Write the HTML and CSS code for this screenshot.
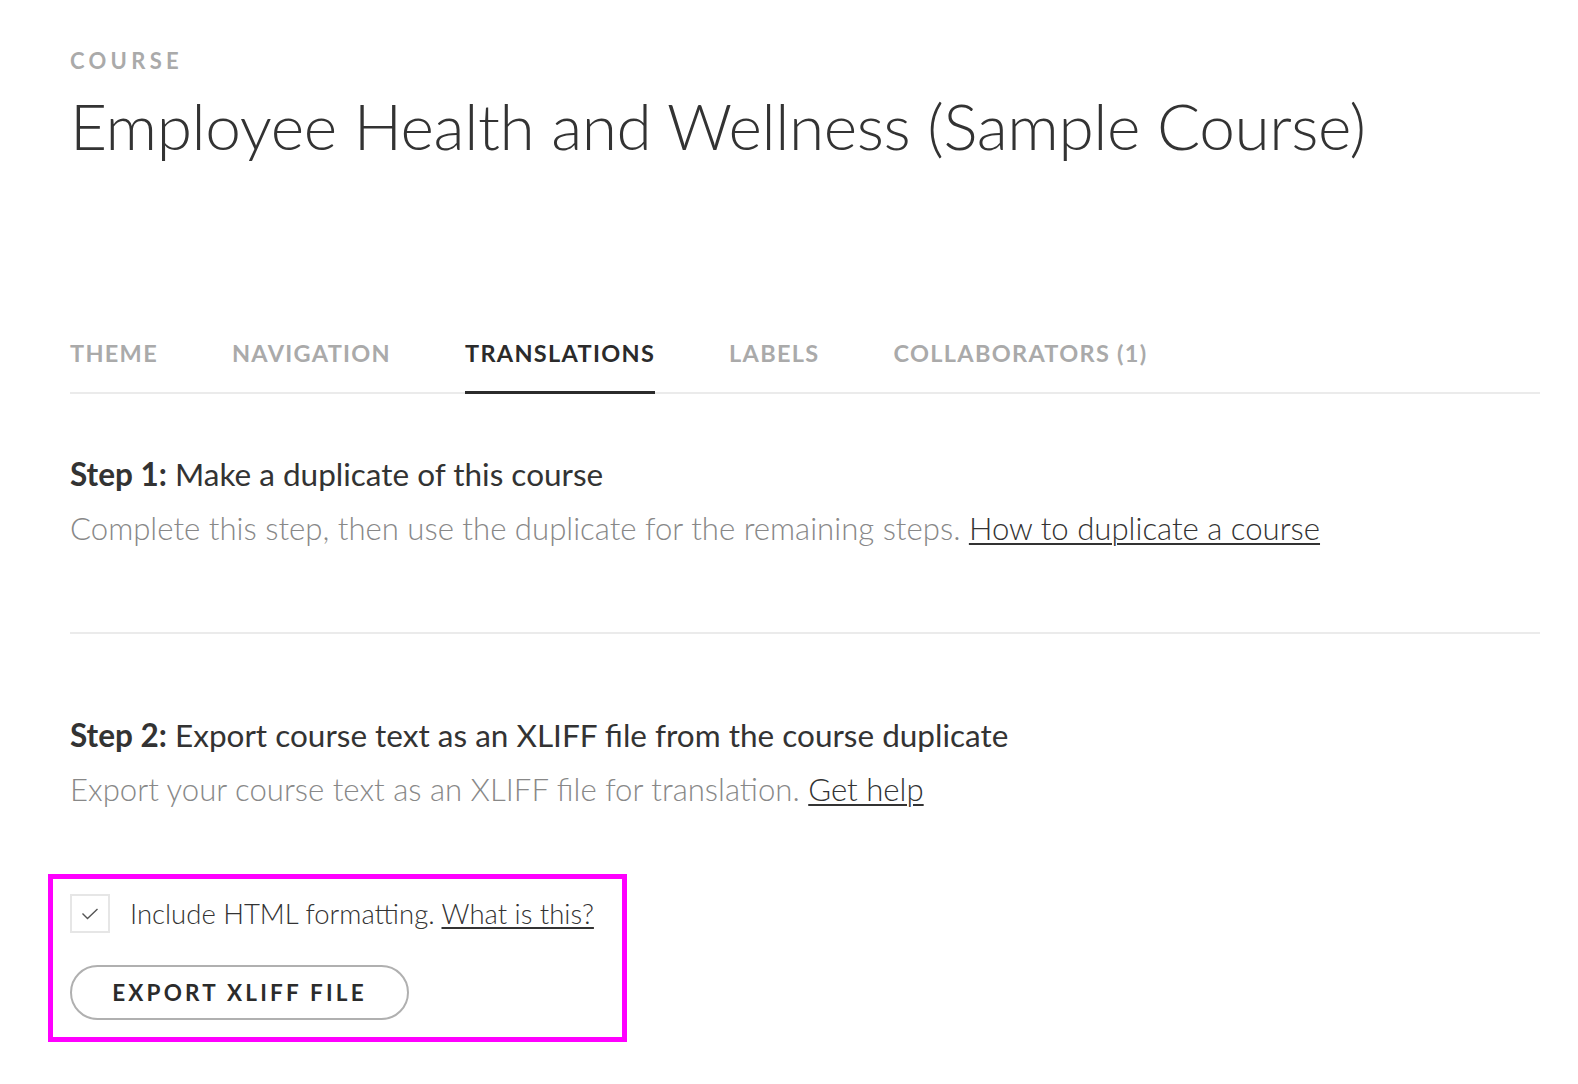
FILE: index.html
```html
<!DOCTYPE html>
<html lang="en">
<head>
<meta charset="utf-8">
<title>Course Settings</title>
<link rel="stylesheet" href="styles.css">
</head>
<body>
<main class="page">
  <header class="course-header">
    <div class="eyebrow">COURSE</div>
    <h1 class="course-title">Employee Health and Wellness (Sample Course)</h1>
  </header>
  <nav class="tabs">
    <a class="tab">THEME</a>
    <a class="tab">NAVIGATION</a>
    <a class="tab active">TRANSLATIONS</a>
    <a class="tab">LABELS</a>
    <a class="tab">COLLABORATORS (1)</a>
  </nav>
  <section class="step step-1">
    <h2 class="step-title"><strong>Step 1:</strong> Make a duplicate of this course</h2>
    <p class="step-desc">Complete this step, then use the duplicate for the remaining steps. <a class="link">How to duplicate a course</a></p>
  </section>
  <section class="step step-2">
    <h2 class="step-title"><strong>Step 2:</strong> Export course text as an XLIFF file from the course duplicate</h2>
    <p class="step-desc">Export your course text as an XLIFF file for translation. <a class="link">Get help</a></p>
    <div class="highlight">
      <label class="check-row">
        <span class="checkbox"><svg width="18" height="12" viewBox="0 0 18 12"><path d="M1.5 5.5 L6.5 10.5 L16.5 1" fill="none" stroke="#555" stroke-width="1.4"/></svg></span>
        <span class="check-label">Include HTML formatting. <a class="link">What is this?</a></span>
      </label>
      <button class="btn-export">EXPORT XLIFF FILE</button>
    </div>
  </section>
</main>
</body>
</html>
```

FILE: styles.css
```css
html, body {
  margin: 0;
  padding: 0;
  background: #fff;
}
body {
  font-family: Lato, "Open Sans", sans-serif;
  color: #333;
}
.page {
  padding: 48px 38px 0 70px;
}
.eyebrow {
  font-size: 22px;
  font-weight: 700;
  letter-spacing: 4.3px;
  color: #aaa;
  line-height: 26px;
}
.course-title {
  margin: 12px 0 0;
  font-size: 64px;
  font-weight: 300;
  line-height: 80px;
  color: #333;
  letter-spacing: -0.4px;
}
.tabs {
  display: flex;
  gap: 74px;
  margin-top: 173px;
  border-bottom: 2px solid #ebebeb;
}
.tab {
  font-size: 23.5px;
  font-weight: 700;
  letter-spacing: 1.3px;
  color: #aaa;
  padding-bottom: 24px;
  line-height: 28px;
  margin-bottom: -2px;
  border-bottom: 3px solid transparent;
}
.tab.active {
  color: #2b2b2b;
  border-bottom-color: #2b2b2b;
}
.step-1 {
  padding-top: 62px;
  padding-bottom: 85px;
  border-bottom: 2px solid #ebebeb;
}
.step-2 {
  padding-top: 83px;
}
.step-title {
  margin: 0;
  font-size: 31.5px;
  font-weight: 400;
  line-height: 36px;
  color: #333;
}
.step-title strong {
  font-weight: 700;
}
.step-desc {
  margin: 17px 0 0;
  font-size: 31.15px;
  font-weight: 300;
  line-height: 38px;
  color: #888;
}
.link {
  color: #333;
  text-decoration: underline;
  text-underline-offset: 3px;
  text-decoration-thickness: 2px;
}
.highlight {
  margin: 66px 0 0 -22px;
  width: 552px;
  border: 5px solid #ff00ff;
  padding: 15px 0 17px 17px;
}
.check-row {
  display: flex;
  align-items: center;
  gap: 20px;
}
.checkbox {
  box-sizing: border-box;
  width: 40px;
  height: 39px;
  border: 2px solid #e6e6e6;
  display: flex;
  align-items: center;
  justify-content: center;
}
.check-label {
  font-size: 27.5px;
  font-weight: 300;
  color: #333;
}
.btn-export {
  display: block;
  margin-top: 32px;
  box-sizing: border-box;
  width: 339px;
  height: 55px;
  border: 2px solid #b0b0b0;
  border-radius: 28px;
  background: #fff;
  font-family: Lato, sans-serif;
  font-size: 22.5px;
  font-weight: 700;
  letter-spacing: 3.2px;
  color: #2b2b2b;
}
```
